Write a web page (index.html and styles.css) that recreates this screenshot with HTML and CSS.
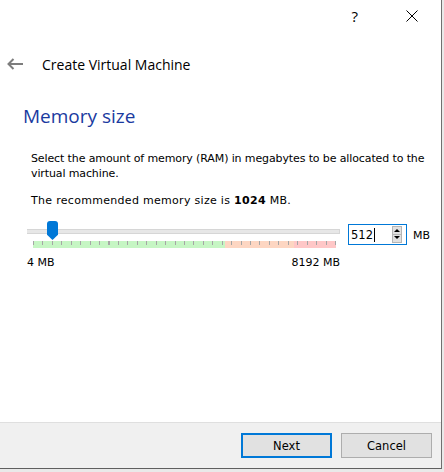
FILE: index.html
```html
<!DOCTYPE html>
<html lang="en">
<head>
  <meta charset="UTF-8" />
  <title>Create Virtual Machine</title>
  <link rel="stylesheet" href="styles.css">
</head>
<body>
  <div class="window">
    <div class="titlebar">
      <span class="help">?</span>
      <svg class="close" width="12" height="12" viewBox="0 0 12 12">
        <path d="M0.5 0.5 L11.5 11.5 M11.5 0.5 L0.5 11.5" stroke="#000" stroke-width="1" fill="none" />
      </svg>
    </div>

    <div class="header">
      <svg class="back" width="16" height="12" viewBox="0 0 16 12">
        <path d="M1.5 6 H16 M6.5 1 L1.5 6 L6.5 11" stroke="#7d7d7d" stroke-width="2" fill="none" />
      </svg>
      <span class="title">Create Virtual Machine</span>
    </div>

    <div class="page">
      <h2 class="heading">Memory size</h2>
      <p class="text">Select the amount of memory (RAM) in megabytes to be allocated to the virtual machine.</p>
      <p class="text recommended">The recommended memory size is <b>1024</b> MB.</p>

      <div class="memory-row">
        <div class="slider">
          <div class="track"></div>
          <div class="handle"></div>
          <div class="ticks"></div>
        </div>
        <div class="spinbox">
          <span class="value">512<span class="caret"></span></span>
          <div class="spin">
            <span class="spin-btn up"></span>
            <span class="spin-btn down"></span>
          </div>
        </div>
        <span class="unit">MB</span>
      </div>
      <div class="range-labels">
        <span>4 MB</span>
        <span>8192 MB</span>
      </div>
    </div>

    <div class="footer">
      <button class="btn default">Next</button>
      <button class="btn">Cancel</button>
    </div>
  </div>
</body>
</html>
```

FILE: styles.css
```css
body {
  margin: 0;
  background: #e9e9e9;
  font-family: "DejaVu Sans", Verdana, sans-serif;
  font-size: 11px;
  color: #000;
}
.window {
  width: 441px;
  height: 468px;
  background: #fff;
  border-right: 1px solid #707070;
  border-bottom: 1px solid #5f5f5f;
  display: flex;
  flex-direction: column;
}
.titlebar {
  height: 32px;
  display: flex;
  align-items: center;
  justify-content: flex-end;
  padding-right: 23px;
  font-family: "Open Sans", sans-serif;
}
.help {
  font-size: 15px;
  margin-right: 48px;
}
.header {
  height: 40px;
  margin-top: 12px;
  display: flex;
  align-items: center;
}
.back {
  margin-left: 7px;
}
.title {
  margin-left: 19px;
  font-family: "Open Sans", sans-serif;
  font-size: 14px;
}
.page {
  padding-left: 27px;
}
.heading {
  margin: 18px 0 0 -4px;
  font-family: "Open Sans", sans-serif;
  font-size: 19px;
  font-weight: normal;
  line-height: 28px;
  color: #1a3a9f;
}
.text {
  margin: 21px 0 0 4px;
  width: 400px;
  line-height: 15px;
  letter-spacing: -0.12px;
}
.text.recommended {
  margin-top: 12px;
  letter-spacing: 0.3px;
}
.memory-row {
  display: flex;
  align-items: flex-start;
  margin-top: 7px;
  height: 36px;
}
.slider {
  position: relative;
  width: 313px;
}
.track {
  margin-top: 14px;
  height: 3px;
  background: #e7e7e7;
  border: 1px solid #d6d6d6;
  border-left: none;
}
.handle {
  position: absolute;
  left: 20px;
  top: 6px;
  width: 11px;
  height: 19px;
  background: #0078d7;
  clip-path: polygon(0 0, 100% 0, 100% 72%, 50% 100%, 0 72%);
  border-radius: 3px 3px 0 0;
}
.ticks {
  margin: 7px 0 0 6px;
  width: 303px;
  height: 7px;
  background:
    repeating-linear-gradient(to right, #a6a6a6 0 1px, transparent 1px 9.4375px) top left / 100% 4px no-repeat,
    linear-gradient(to right, #c6f6c4 0 63.5%, #fdd6c2 63.5% 86.3%, #ffc7c7 86.3% 100%);
}
.spinbox {
  margin: 9px 0 0 8px;
  width: 59px;
  height: 21px;
  box-sizing: border-box;
  border: 1px solid #0078d7;
  display: flex;
  align-items: center;
  justify-content: space-between;
  padding: 0 4px 0 2px;
}
.value {
  display: flex;
  align-items: center;
  font-size: 11.5px;
}
.caret {
  display: inline-block;
  width: 1px;
  height: 14px;
  background: #000;
  margin-left: 1px;
}
.spin {
  display: flex;
  flex-direction: column;
  width: 10px;
  height: 17px;
}
.spin-btn {
  flex: 1;
  background: #e1e1e1;
  border: 1px solid #b5b5b5;
  position: relative;
}
.spin-btn.down {
  border-top: none;
}
.spin-btn::after {
  content: "";
  position: absolute;
  left: 1px;
  border-left: 3px solid transparent;
  border-right: 3px solid transparent;
}
.spin-btn.up::after {
  top: 2px;
  border-bottom: 3px solid #000;
}
.spin-btn.down::after {
  top: 1px;
  border-top: 3px solid #000;
}
.unit {
  margin: 13px 0 0 6px;
  line-height: 15px;
}
.range-labels {
  width: 313px;
  display: flex;
  justify-content: space-between;
  margin-top: 4px;
  line-height: 15px;
}
.footer {
  margin-top: auto;
  height: 45px;
  background: #f0f0f0;
  border-top: 1px solid #dfdfdf;
  display: flex;
  align-items: center;
  justify-content: flex-end;
  gap: 9px;
  padding-right: 9px;
}
.btn {
  width: 91px;
  height: 25px;
  background: #e1e1e1;
  border: 1px solid #adadad;
  font-family: "DejaVu Sans", Verdana, sans-serif;
  font-size: 11.5px;
  color: #000;
  padding: 0;
}
.btn.default {
  border: 2px solid #0078d7;
}
```
